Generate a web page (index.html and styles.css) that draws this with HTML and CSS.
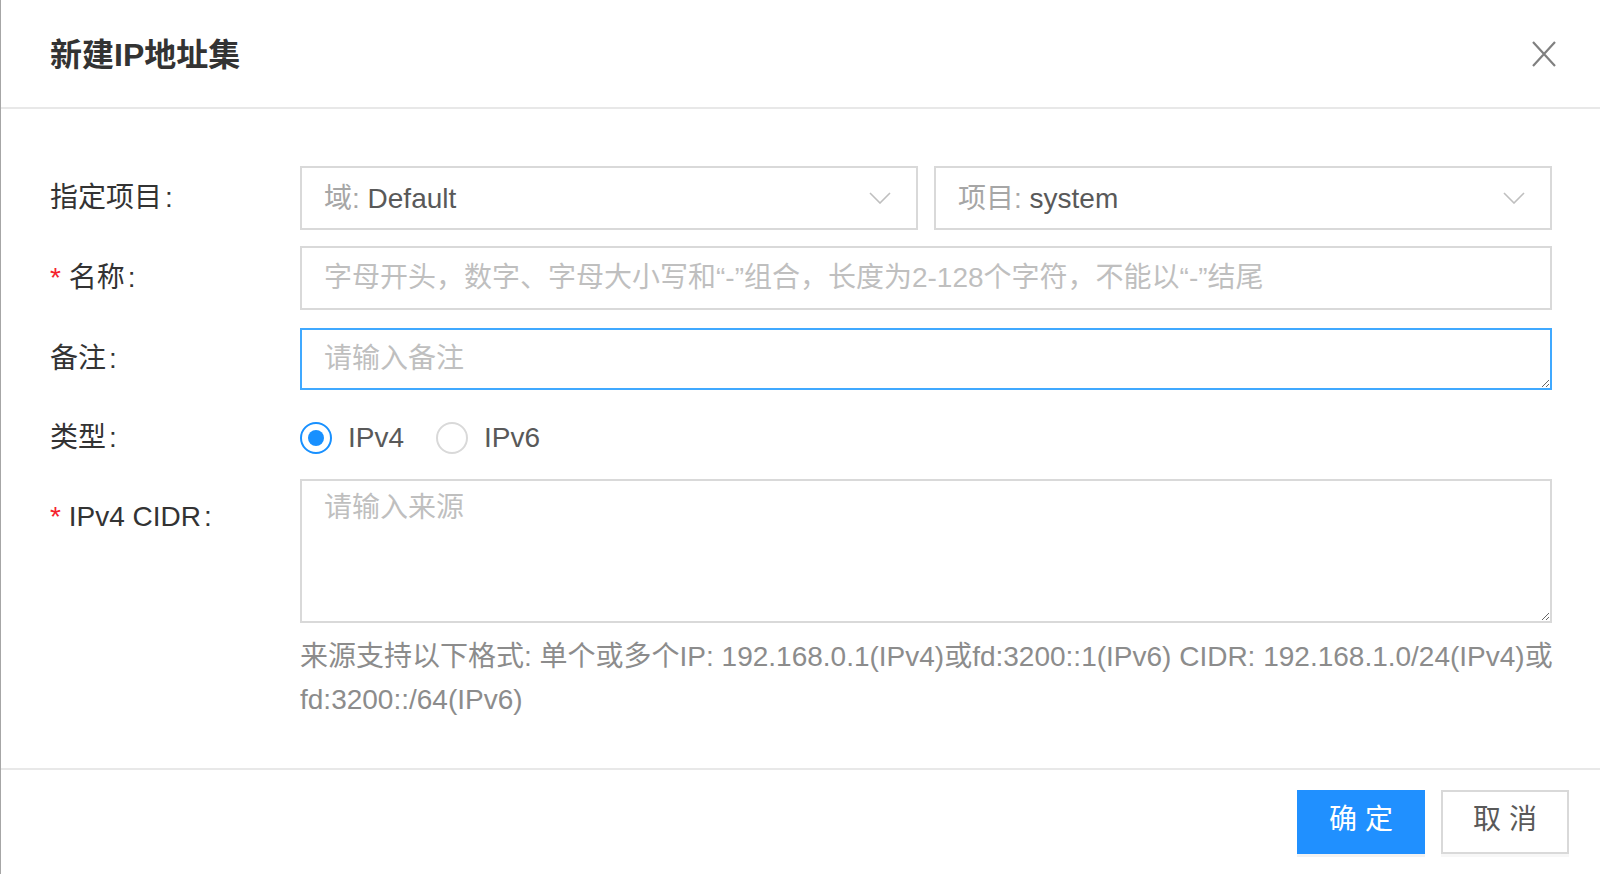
FILE: index.html
```html
<!DOCTYPE html>
<html lang="zh-CN">
<head>
<meta charset="utf-8">
<title>新建IP地址集</title>
<link rel="stylesheet" href="styles.css">
</head>
<body>
<div class="dialog">
  <header class="dialog-header">
    <h1 class="dialog-title">新建IP地址集</h1>
    <button class="close-btn" type="button" aria-label="关闭">
      <svg width="24" height="26" viewBox="0 0 24 26"><path d="M1 1 L23 25 M23 1 L1 25" stroke="#808080" stroke-width="2.2" fill="none"/></svg>
    </button>
  </header>

  <div class="dialog-body">
    <form class="form">
      <div class="form-row">
        <label class="form-label">指定项目<span class="colon">:</span></label>
        <div class="form-control select-pair">
          <div class="select">
            <span class="select-text"><span class="select-prefix">域:</span> Default</span>
            <svg class="chevron" width="22" height="12" viewBox="0 0 22 12"><path d="M1 1 L11 11 L21 1" stroke="#bfbfbf" stroke-width="1.6" fill="none"/></svg>
          </div>
          <div class="select">
            <span class="select-text"><span class="select-prefix">项目:</span> system</span>
            <svg class="chevron" width="22" height="12" viewBox="0 0 22 12"><path d="M1 1 L11 11 L21 1" stroke="#bfbfbf" stroke-width="1.6" fill="none"/></svg>
          </div>
        </div>
      </div>

      <div class="form-row">
        <label class="form-label"><span class="required">*</span> 名称<span class="colon">:</span></label>
        <div class="form-control">
          <input class="input" type="text" placeholder="字母开头，数字、字母大小写和“-”组合，长度为2-128个字符，不能以“-”结尾">
        </div>
      </div>

      <div class="form-row row-note">
        <label class="form-label">备注<span class="colon">:</span></label>
        <div class="form-control">
          <textarea class="textarea textarea-note is-focused" placeholder="请输入备注"></textarea>
        </div>
      </div>

      <div class="form-row row-radio">
        <label class="form-label">类型<span class="colon">:</span></label>
        <div class="form-control radio-group">
          <span class="radio checked"><span class="radio-dot"></span></span><span class="radio-label">IPv4</span>
          <span class="radio"><span class="radio-dot"></span></span><span class="radio-label">IPv6</span>
        </div>
      </div>

      <div class="form-row row-cidr">
        <label class="form-label label-top"><span class="required">*</span> IPv4 CIDR<span class="colon">:</span></label>
        <div class="form-control">
          <textarea class="textarea textarea-cidr" placeholder="请输入来源"></textarea>
          <p class="help">来源支持以下格式: 单个或多个IP: 192.168.0.1(IPv4)或fd:3200::1(IPv6) CIDR: 192.168.1.0/24(IPv4)或<br>fd:3200::/64(IPv6)</p>
        </div>
      </div>
    </form>
  </div>

  <footer class="dialog-footer">
    <button class="btn btn-primary" type="button">确 定</button>
    <button class="btn btn-default" type="button">取 消</button>
  </footer>
</div>
</body>
</html>
```

FILE: styles.css
```css
* { box-sizing: border-box; }

html, body {
  margin: 0;
  padding: 0;
  background: #fff;
}

body {
  font-family: "Liberation Sans", "Noto Sans CJK SC", sans-serif;
  color: #333;
  width: 1600px;
  height: 874px;
  overflow: hidden;
}

.dialog {
  border-left: 1px solid #a6a6a6;
  min-height: 874px;
  background: #fff;
}

.dialog-header {
  height: 109px;
  border-bottom: 2px solid #e8e8e8;
  display: flex;
  align-items: center;
  justify-content: space-between;
  padding: 0 44px 0 49px;
}

.dialog-title {
  margin: 0;
  font-size: 32px;
  font-weight: 600;
  color: #333;
  line-height: 44px;
  padding-top: 2px;
}

.close-btn {
  border: 0;
  background: transparent;
  padding: 0;
  width: 24px;
  height: 26px;
  display: flex;
  align-items: center;
  justify-content: center;
  cursor: pointer;
}

.dialog-body {
  padding: 57px 48px 47px 49px;
}

.form {
  display: flex;
  flex-direction: column;
  margin: 0;
}

.form-row {
  display: flex;
  align-items: center;
}

.form-row + .form-row { margin-top: 16px; }
.form-row.row-note { margin-top: 18px; }

.form-label {
  width: 250px;
  flex: none;
  font-size: 28px;
  line-height: 42px;
  color: #333;
  white-space: nowrap;
}

.label-top {
  align-self: flex-start;
  padding-top: 17px;
}

.colon {
  margin-left: 3px;
}

.required {
  color: #f5222d;
}

.form-control {
  flex: 1;
  min-width: 0;
}

.select-pair {
  display: flex;
  gap: 16px;
}

.select {
  flex: 1;
  height: 64px;
  border: 2px solid #d9d9d9;
  display: flex;
  align-items: center;
  justify-content: space-between;
  padding: 0 25px 5px 22px;
  font-size: 28px;
  color: #595959;
}

.select .chevron { margin-top: 5px; }

.select-prefix {
  color: #a6a6a6;
}

.chevron { flex: none; }

.input,
.textarea {
  display: block;
  width: 100%;
  border: 2px solid #d9d9d9;
  border-radius: 0;
  font-family: inherit;
  font-size: 28px;
  color: #595959;
  outline: none;
  background: #fff;
  margin: 0;
}

.input {
  height: 64px;
  padding: 0 22px;
}

.input::placeholder,
.textarea::placeholder {
  color: #bfbfbf;
}

.textarea {
  line-height: 42px;
  padding: 8px 22px;
  resize: vertical;
}

.textarea-note { height: 62px; }
.textarea-cidr { height: 144px; padding-top: 6px; }

.is-focused {
  border-color: #40a9ff;
}

.row-radio {
  height: 57px;
  padding-top: 6px;
}

.radio-group {
  display: flex;
  align-items: center;
}

.radio {
  width: 32px;
  height: 32px;
  border-radius: 50%;
  border: 2px solid #d9d9d9;
  display: flex;
  align-items: center;
  justify-content: center;
  flex: none;
}

.radio.checked { border-color: #1890ff; }

.radio-dot {
  width: 16px;
  height: 16px;
  border-radius: 50%;
  background: transparent;
}

.radio.checked .radio-dot { background: #1890ff; }

.radio-label {
  font-size: 28px;
  line-height: 42px;
  color: #595959;
  margin: 0 32px 0 16px;
}

.help {
  margin: 12px 0 0;
  font-size: 28px;
  line-height: 43px;
  color: #8c8c8c;
  white-space: nowrap;
}

.dialog-footer {
  border-top: 2px solid #e8e8e8;
  padding: 20px 31px 0 0;
  display: flex;
  justify-content: flex-end;
  gap: 16px;
}

.btn {
  width: 128px;
  height: 64px;
  font-family: inherit;
  font-size: 28px;
  line-height: 1;
  border-radius: 0;
  cursor: pointer;
  padding: 0 0 4px;
}

.btn-primary {
  background: #2090ff;
  border: 2px solid #2090ff;
  color: #fff;
  box-shadow: 0 3px 0 #f2f2f2;
}

.btn-default {
  background: #fff;
  border: 2px solid #d9d9d9;
  color: #595959;
  box-shadow: 0 3px 0 #f7f7f7;
}
```
